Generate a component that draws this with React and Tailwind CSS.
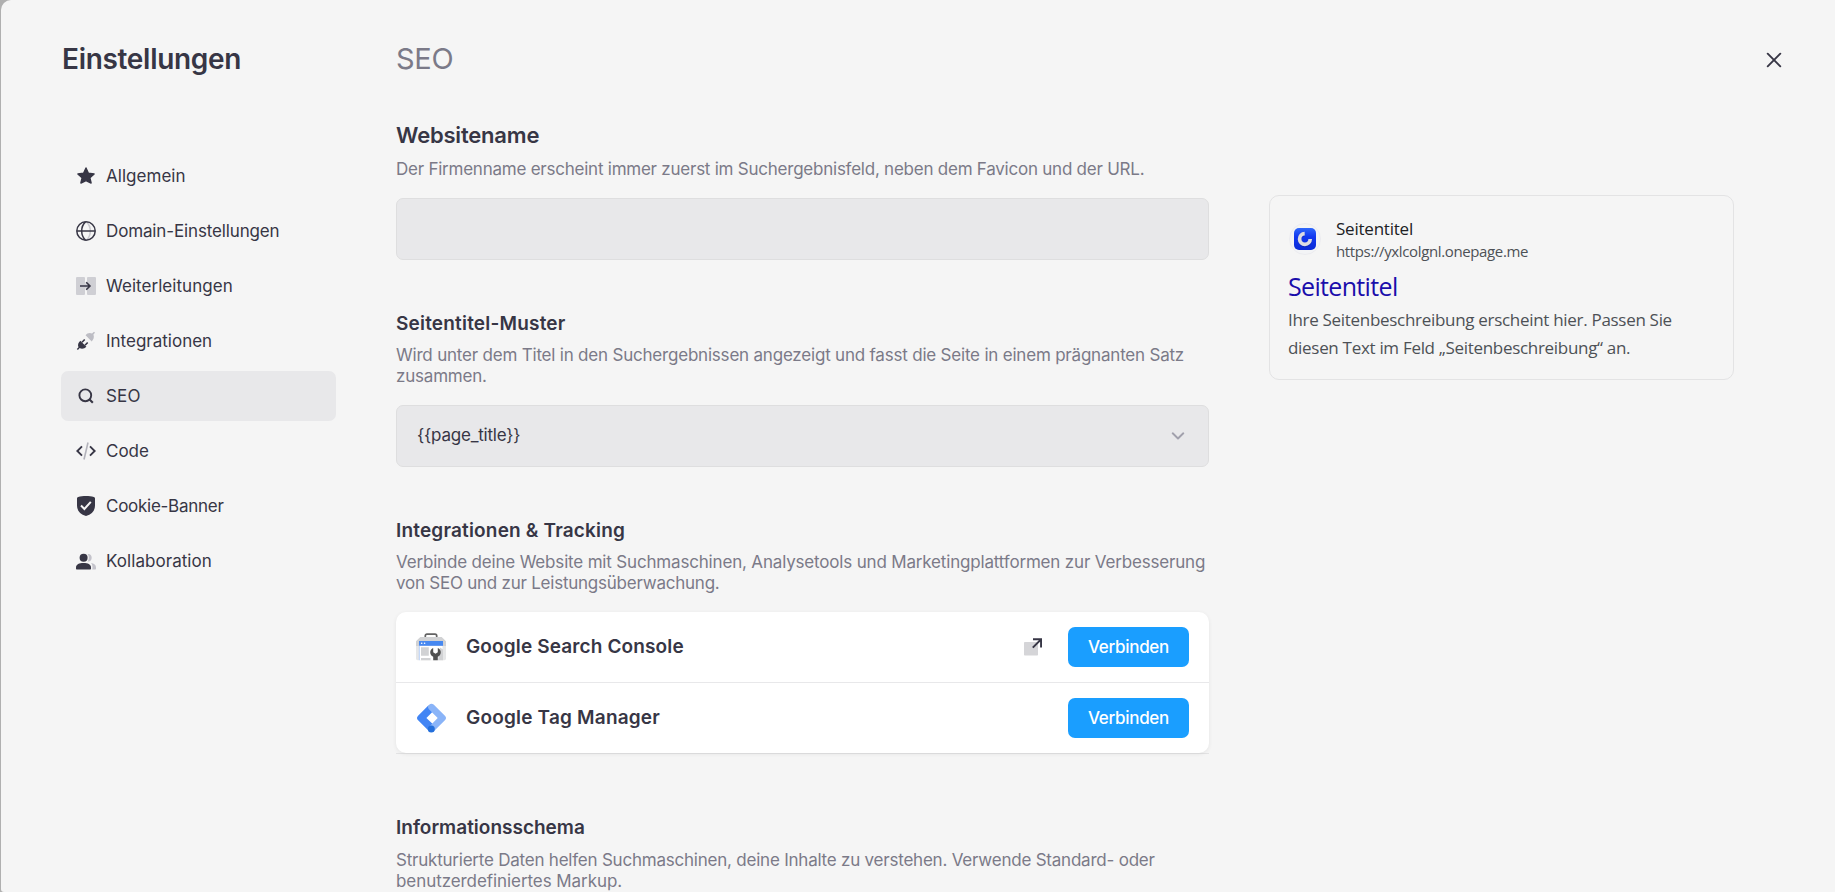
const DARK = '#373645'
const MUTED = '#c9c9cf'

function Star() {
  return (
    <svg width="20" height="20" viewBox="0 0 20 20" fill={DARK} stroke={DARK} strokeWidth="1.4" strokeLinejoin="round">
      <path d="M10 2l2.4 5.3 5.7.6-4.2 3.9 1.2 5.2L10 14.6l-5.1 2.4 1.2-5.2-4.2-3.9 5.7-.6z" />
    </svg>
  )
}

function Globe() {
  return (
    <svg width="20" height="20" viewBox="0 0 20 20" fill="none" strokeWidth="1.5">
      <path d="M10.500.9c2.600 2.400 3.800 5.500 3.800 9.100s-1.200 6.700-3.800 9.100" stroke={MUTED} />
      <path d="M9.500.9C6.900 3.300 5.700 6.400 5.700 10s1.200 6.700 3.800 9.100" stroke={DARK} />
      <circle cx="10" cy="10" r="9.2" stroke={DARK} />
      <path d="M1 10h18" stroke={DARK} />
    </svg>
  )
}

function Redirect() {
  return (
    <svg width="20" height="20" viewBox="0 0 20 20" fill="none">
      <path d="M1 1h7a1 1 0 011 1v5.500h2V2a1 1 0 011-1h7a1 1 0 011 1v16a1 1 0 01-1 1h-7a1 1 0 01-1-1v-5.500H9V18a1 1 0 01-1 1H1a1 1 0 01-1-1V2a1 1 0 011-1z" fill="#cfcfd4" />
      <path d="M4 10h10M10.200 6.200L14 10l-3.800 3.800" stroke={DARK} strokeWidth="1.600" />
    </svg>
  )
}

function Plug() {
  return (
    <svg width="20" height="20" viewBox="0 0 20 20" fill="none">
      <path d="M9.600 4.200c1.600-1.900 4-2.800 6.400-1.600L18 .7l1 1-1.600 1.900c1 2.500.3 5-1.700 6.800z" fill="#bdbdc4" />
      <path d="M4.300 9.700l6.100 6c-1.800 1.900-4.500 2.500-6.700 1.400L1.900 19 .8 17.900l1.700-1.700C1.400 14 2.300 11.400 4.300 9.700z" fill={DARK} />
      <path d="M6 11.200l2.700-2.700M9 14.200l2.700-2.700" stroke={DARK} strokeWidth="1.600" />
    </svg>
  )
}

function Search() {
  return (
    <svg width="20" height="20" viewBox="0 0 20 20" fill="none" stroke={DARK} strokeWidth="1.9">
      <circle cx="9.300" cy="9.300" r="5.900" />
      <path d="M13.300 13.300l3.500 3.500" strokeWidth="2.1" />
    </svg>
  )
}

function Code() {
  return (
    <svg width="20" height="20" viewBox="0 0 20 20" fill="none" strokeWidth="1.9">
      <path d="M12 1.500L8 18.500" stroke="#b3b3bb" strokeWidth="1.600" />
      <path d="M6 5.300L1.300 10 6 14.700M14 5.300l4.700 4.700-4.700 4.700" stroke={DARK} />
    </svg>
  )
}

function Shield() {
  return (
    <svg width="20" height="20" viewBox="0 0 20 20" fill="none">
      <path d="M2.200.9C4.500.2 7 0 10 0s5.500.2 7.800.9c.8.2 1.200.7 1.200 1.400v7.200c0 5-3 8.800-9 10.500-6-1.700-9-5.500-9-10.500V2.300C1 1.600 1.400 1.100 2.200.9z" fill={DARK} />
      <path d="M5 9.500l3.400 3.500L14.800 5.800" stroke="#f5f5f5" strokeWidth="2" />
    </svg>
  )
}

function Users() {
  return (
    <svg width="20" height="20" viewBox="0 0 20 20">
      <path d="M11.500 3c2.600-.4 4.200 1.300 4.200 3.700s-1.600 4.100-4.200 3.700c.9-1 1.300-2.300 1.300-3.700S12.400 4 11.500 3zM15 12.100c3.200.4 5 2 5 4.500v.9c0 .6-.4 1-1 1h-2.700c.5-2.500.2-4.700-1.300-6.400z" fill="#c4c3cb" />
      <circle cx="7.600" cy="6.700" r="4" fill={DARK} />
      <path d="M0 16.400c0-3 3.200-4.400 7.500-4.400s7.500 1.400 7.500 4.400v1.100c0 .6-.4 1-1 1H1c-.6 0-1-.4-1-1z" fill={DARK} />
    </svg>
  )
}

function Close() {
  return (
    <svg width="16" height="16" viewBox="0 0 16 16" fill="none" stroke={DARK} strokeWidth="1.9" strokeLinecap="round">
      <path d="M1.700 1.700l12.600 12.600M14.300 1.700L1.700 14.300" />
    </svg>
  )
}

function Chevron() {
  return (
    <svg width="14" height="8" viewBox="0 0 14 8" fill="none" stroke="#a1a0ac" strokeWidth="1.9" strokeLinecap="round" strokeLinejoin="round">
      <path d="M1.700 1.300L7 6.500l5.300-5.200" />
    </svg>
  )
}

function External() {
  return (
    <svg width="18" height="18" viewBox="0 0 18 18" fill="none">
      <rect x="0" y="4" width="14" height="13.500" rx=".8" fill="#d5d5d8" />
      <path d="M8.800 9.600l8-8M9 1.200h8.100v8.300" stroke={DARK} strokeWidth="2" />
    </svg>
  )
}

function SearchConsoleLogo() {
  return (
    <svg width="30" height="28" viewBox="0 0 30 28" fill="none">
      <path d="M9.300 5V2.800c0-1 .7-1.700 1.700-1.700h8c1 0 1.700.7 1.700 1.700V5" stroke="#636363" strokeWidth="1.700" />
      <path d="M0 12h30v13.500c0 1-.7 1.700-1.700 1.700H1.700c-1 0-1.700-.7-1.700-1.700z" fill="#e6e7e8" />
      <path d="M4.300 4h21.400L30 8.200V13H0V8.200z" fill="#d1d2d4" />
      <path d="M3.500 12.500h23v14.700h-23z" fill="#fff" />
      <path d="M3 8h24v4.800H3z" fill="#4688f1" />
      <circle cx="5.700" cy="10.300" r=".8" fill="#fff" />
      <circle cx="8.600" cy="10.300" r=".8" fill="#fff" />
      <path d="M3.300 12.800v14.400" stroke="#b9d2fa" />
      <path d="M5 14.200h7.800v8.600H5zM5 25h9.500v2.200H5z" fill="#d1d2d4" />
      <path d="M24 14.500l3 2v10.700h-5z" fill="#d1d2d4" />
      <path d="M17.200 15c-1.900.9-3 2.400-3 4.300 0 2.100 1.200 3.600 3 4.400v3.500h4.600v-3.500c1.800-.8 3-2.300 3-4.400 0-1.900-1.100-3.400-3-4.300v4.200l-2.300 1.600-2.300-1.600z" fill="#505050" />
    </svg>
  )
}

function TagManagerLogo() {
  return (
    <svg width="30" height="30" viewBox="0 0 30 30">
      <path d="M18 4.200L12.300 2.500 2.100 12.700a3.300 3.300 0 000 4.600l10 10 5.700-5.400L10.400 15l7.200-7.200z" fill="#4285f4" />
      <path d="M28.900 12.700L17.600 1.600a3.300 3.300 0 00-4.700 4.600l8.800 8.800-8.800 9 4.700 4.600 11.300-11.300a3.300 3.300 0 000-4.600z" fill="#8ab4f8" />
      <circle cx="15.300" cy="26.100" r="3.500" fill="#246fdb" />
    </svg>
  )
}

function Favicon() {
  return (
    <svg width="22" height="22" viewBox="0 0 22 22" fill="none">
      <defs>
        <linearGradient id="fav-bg" x1="0" y1="0" x2="0" y2="1">
          <stop offset="0" stopColor="#2f68fb" />
          <stop offset=".4" stopColor="#1238f0" />
          <stop offset="1" stopColor="#0a2ad6" />
        </linearGradient>
      </defs>
      <rect width="22" height="22" rx="5" fill="url(#fav-bg)" />
      <path d="M10.500 7A5.300 5.300 0 1016.300 12.300" stroke="#0a22a8" strokeWidth="3.500" opacity=".5" />
      <path d="M10.700 5.700A5.300 5.300 0 1016.200 11" stroke="#dcdce2" strokeWidth="3.700" />
    </svg>
  )
}

const NAV = [
  { label: 'Allgemein', icon: Star, tracking: 'tracking-[0.002em]' },
  { label: 'Domain-Einstellungen', icon: Globe, tracking: 'tracking-[-0.008em]' },
  { label: 'Weiterleitungen', icon: Redirect, tracking: 'tracking-[0.003em]' },
  { label: 'Integrationen', icon: Plug, tracking: 'tracking-[0]' },
  { label: 'SEO', icon: Search, active: true, tracking: 'tracking-[0.01em]' },
  { label: 'Code', icon: Code, tracking: 'tracking-[0]' },
  { label: 'Cookie-Banner', icon: Shield, tracking: 'tracking-[-0.016em]' },
  { label: 'Kollaboration', icon: Users, tracking: 'tracking-[0.003em]' },
]

const INTEGRATIONS = [
  { name: 'Google Search Console', logo: SearchConsoleLogo, link: true, tracking: 'tracking-[0.007em]' },
  { name: 'Google Tag Manager', logo: TagManagerLogo, tracking: 'tracking-[0.01em]' },
]

function Section({ title, tracking, children }) {
  return (
    <>
      <h3 className={`text-[19px] leading-6 font-semibold text-[#373645] ${tracking}`}>{title}</h3>
      {children}
    </>
  )
}

function Hint({ className, children }) {
  return <p className={`text-[17px] leading-[21px] text-[#7b7a88] ${className}`}>{children}</p>
}

export default function App() {
  return (
    <div className="h-[892px] overflow-hidden bg-[#b0b0b0] pl-px font-['Inter',sans-serif]">
      <div className="h-full flex items-start bg-[#f5f5f5] rounded-tl-[10px] rounded-bl-[3px] overflow-hidden">
        {/* sidebar */}
        <aside className="w-[335px] shrink-0 pl-[60px] pt-[39px]">
          <h1 className="pl-px text-[28px] leading-10 font-semibold tracking-[-0.011em] text-[#373645]">Einstellungen</h1>
          <nav className="mt-[72px] flex flex-col gap-[5px]">
            {NAV.map(({ label, icon: Icon, active, tracking }) => (
              <a key={label} className={`h-[50px] px-[15px] flex items-center gap-[10px] rounded-[7px] text-[17px] text-[#373645] ${tracking} ${active ? 'bg-[#e8e8ea]' : ''}`}>
                <Icon />
                <span className="pt-0.5">{label}</span>
              </a>
            ))}
          </nav>
        </aside>

        {/* content */}
        <main className="w-[813px] shrink-0 ml-[60px] pt-[39px]">
          <h2 className="text-[29px] leading-10 tracking-[-0.01em] text-[#7b7a88]">SEO</h2>

          <h3 className="mt-[42px] text-[22px] leading-7 font-semibold tracking-[-0.009em] text-[#373645]">Websitename</h3>
          <Hint className="mt-[10px] tracking-[-0.0139em]">
            Der Firmenname erscheint immer zuerst im Suchergebnisfeld, neben dem Favicon und der URL.
          </Hint>
          <div className="mt-[18px] h-[62px] rounded-[7px] border border-[#dededf] bg-[#e8e8ea]" />

          <div className="mt-[52px]">
            <Section title="Seitentitel-Muster" tracking="tracking-[0.01em]">
              <Hint className="mt-[9px] tracking-[-0.012em]">
                Wird unter dem Titel in den Suchergebnissen angezeigt und fasst die Seite in einem prägnanten Satz<br />zusammen.
              </Hint>
              <div className="mt-[18px] h-[62px] pl-5 pr-[23px] flex items-center justify-between rounded-[7px] border border-[#dededf] bg-[#e8e8ea]">
                <span className="text-[17px] tracking-[-0.013em] text-[#373645]">{'{{page_title}}'}</span>
                <Chevron />
              </div>
            </Section>
          </div>

          <div className="mt-[52px]">
            <Section title="Integrationen & Tracking" tracking="tracking-[0.0095em]">
              <Hint className="mt-[9px] tracking-[-0.0103em]">
                Verbinde deine Website mit Suchmaschinen, Analysetools und Marketingplattformen zur Verbesserung<br />
                <span className="tracking-[-0.014em]">von SEO und zur Leistungsüberwachung.</span>
              </Hint>
              <div className="mt-[18px] border-b border-[#e3e3e4]">
                <div className="rounded-[10px] bg-white divide-y divide-[#e8e8ea] shadow-[0_1px_4px_rgba(0,0,0,0.07)]">
                  {INTEGRATIONS.map(({ name, logo: Logo, link, tracking }) => (
                    <div key={name} className="h-[71px] last:h-[70px] px-5 flex items-center">
                      <Logo />
                      <span className={`ml-5 text-[19px] font-semibold text-[#373645] ${tracking}`}>{name}</span>
                      <div className="ml-auto flex items-center gap-[26px]">
                        {link && <External />}
                        <button className="w-[121px] h-10 pt-px rounded-[7px] bg-[#1a9eff] text-[17px] font-medium tracking-[-0.018em] text-white">Verbinden</button>
                      </div>
                    </div>
                  ))}
                </div>
              </div>
            </Section>
          </div>

          <div className="mt-[62px]">
            <Section title="Informationsschema" tracking="tracking-[0]">
              <Hint className="mt-[10px] tracking-[-0.013em]">
                Strukturierte Daten helfen Suchmaschinen, deine Inhalte zu verstehen. Verwende Standard- oder<br />
                <span className="tracking-[-0.004em]">benutzerdefiniertes Markup.</span>
              </Hint>
            </Section>
          </div>
        </main>

        {/* search result preview */}
        <section className="w-[465px] h-[185px] shrink-0 ml-[60px] mt-[195px] pl-[18px] pr-5 pt-[21px] rounded-[10px] border border-[#e3e3e4] font-['Open_Sans',sans-serif]">
          <div className="flex items-center gap-4">
            <div className="w-8 h-8 ml-px -mr-px flex items-center justify-center rounded-full border border-[#ececf0] bg-[#f3f4f6]">
              <Favicon />
            </div>
            <div>
              <p className="text-[17px] leading-6 tracking-[-0.013em] text-[#202124]">Seitentitel</p>
              <p className="mt-px text-[15px] leading-[18px] tracking-[-0.0245em] text-[#4d5156]">https://yxlcolgnl.onepage.me</p>
            </div>
          </div>
          <h4 className="mt-[10px] text-[25px] leading-8 tracking-[-0.0265em] text-[#1a0dab]">Seitentitel</h4>
          <p className="mt-[4px] text-[17px] leading-7 tracking-[-0.0178em] text-[#4d5156]">
            Ihre Seitenbeschreibung erscheint hier. Passen Sie<br />diesen Text im Feld „Seitenbeschreibung“ an.
          </p>
        </section>

        <button className="ml-8 mt-[52px]">
          <Close />
        </button>
      </div>
    </div>
  )
}
